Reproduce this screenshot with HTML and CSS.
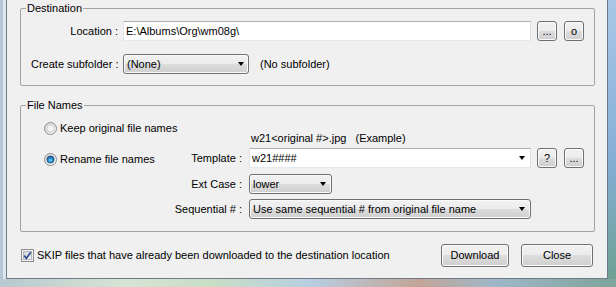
FILE: index.html
```html
<!DOCTYPE html>
<html>
<head>
    <meta charset="UTF-8">
    <title>Download</title>
    <link rel="stylesheet" href="styles.css">
</head>
<body>
    <div class="window">
        <fieldset class="group">
            <legend>Destination</legend>
            <div class="group-body dest">
                <div class="row">
                    <label class="cap">Location :</label>
                    <div class="textbox loc">E:\Albums\Org\wm08g\</div>
                    <button class="btn tiny first">...</button>
                    <button class="btn tiny">o</button>
                </div>
                <div class="row">
                    <label class="cap">Create subfolder :</label>
                    <div class="dropdown sub"><span>(None)</span><span class="arrow"></span></div>
                    <span class="note">(No subfolder)</span>
                </div>
            </div>
        </fieldset>

        <fieldset class="group names">
            <legend>File Names</legend>
            <div class="group-body names-body">
                <div class="options">
                    <label class="option">
                        <svg class="radio" width="13" height="13" viewBox="0 0 13 13">
                            <defs>
                                <linearGradient id="r1" x1="0" y1="0" x2="1" y2="1">
                                    <stop offset="0" stop-color="#d6d6d6"/>
                                    <stop offset="1" stop-color="#fbfbfb"/>
                                </linearGradient>
                            </defs>
                            <circle cx="6.5" cy="6.5" r="6" fill="url(#r1)" stroke="#8c8c8c"/>
                            <circle cx="6.5" cy="6.5" r="3.8" fill="#f4f4f4" stroke="#c9c9c9"/>
                        </svg>
                        Keep original file names
                    </label>
                    <label class="option second">
                        <svg class="radio" width="13" height="13" viewBox="0 0 13 13">
                            <defs>
                                <linearGradient id="r2" x1="0" y1="0" x2="1" y2="1">
                                    <stop offset="0" stop-color="#d6d6d6"/>
                                    <stop offset="1" stop-color="#fbfbfb"/>
                                </linearGradient>
                                <radialGradient id="r2dot" cx="0.5" cy="0.6" r="0.6">
                                    <stop offset="0" stop-color="#6fd3fa"/>
                                    <stop offset="0.6" stop-color="#1f82c6"/>
                                    <stop offset="1" stop-color="#0d3f6e"/>
                                </radialGradient>
                            </defs>
                            <circle cx="6.5" cy="6.5" r="6" fill="url(#r2)" stroke="#8c8c8c"/>
                            <circle cx="6.5" cy="6.5" r="3.6" fill="url(#r2dot)" stroke="#24507a" stroke-width="0.8"/>
                        </svg>
                        Rename file names
                    </label>
                </div>
                <div class="fields">
                    <div class="example">
                        <span>w21&lt;original #&gt;.jpg</span>
                        <span class="example-tag">(Example)</span>
                    </div>
                    <div class="field-row template">
                        <label class="field-label">Template :</label>
                        <div class="textbox combo"><span>w21####</span><span class="arrow"></span></div>
                        <button class="btn tiny first">?</button>
                        <button class="btn tiny">...</button>
                    </div>
                    <div class="field-row ext">
                        <label class="field-label">Ext Case :</label>
                        <div class="dropdown ext-case"><span>lower</span><span class="arrow"></span></div>
                    </div>
                    <div class="field-row seq">
                        <label class="field-label">Sequential # :</label>
                        <div class="dropdown seq-mode"><span>Use same sequential # from original file name</span><span class="arrow"></span></div>
                    </div>
                </div>
            </div>
        </fieldset>

        <div class="footer">
            <label class="skip">
                <svg class="check" width="13" height="13" viewBox="0 0 13 13">
                    <defs>
                        <linearGradient id="cb" x1="0" y1="0" x2="1" y2="1">
                            <stop offset="0" stop-color="#cfd3d8"/>
                            <stop offset="1" stop-color="#f6f7f8"/>
                        </linearGradient>
                    </defs>
                    <rect x="0.5" y="0.5" width="12" height="12" fill="#f3f3f3" stroke="#8e8f8f"/>
                    <rect x="2.5" y="2.5" width="8" height="8" fill="url(#cb)" stroke="#b4b9bf"/>
                    <path d="M3.2 6.6 L5.4 9.4 L9.8 3.2" fill="none" stroke="#2e4c92" stroke-width="1.7"/>
                </svg>
                SKIP files that have already been downloaded to the destination location
            </label>
            <button class="btn action download">Download</button>
            <button class="btn action">Close</button>
        </div>
    </div>
</body>
</html>
```

FILE: styles.css
```css
* {
    box-sizing: border-box;
    margin: 0;
    padding: 0;
}

body {
    width: 616px;
    height: 287px;
    overflow: hidden;
    font-family: "Liberation Sans", Arial, sans-serif;
    font-size: 11px;
    line-height: 13px;
    color: #000;
    background:
        linear-gradient(90deg, #b9c8cf 0%, #d6e4d4 20%, #c9ddc4 35%, #b7cfe2 50%, #c2a597 68%, #9fb7c8 80%, #7ea49a 100%) left bottom / 100% 8px no-repeat,
        linear-gradient(90deg, #b5c6d6 0, #b5c6d6 3px, #dfe7ee 3px, #dfe7ee 6px) left top / 6px 100% no-repeat,
        linear-gradient(180deg, #a9c8e6 0%, #86afd6 55%, #6d9f8f 100%);
}

.window {
    width: 602px;
    height: 279px;
    margin-left: 6px;
    background: #f0f0f0;
    border: 1px solid #6e7a86;
    border-top: none;
    padding: 2px 12px 0 13px;
}

button,
label {
    font: inherit;
    color: inherit;
}

.group {
    border: 1px solid #a3a3a3;
    border-radius: 2px;
    padding: 0;
    margin: 0;
    min-width: 0;
}

.group legend {
    margin-left: 5px;
    padding: 0 1px;
    line-height: 13px;
}

.dest {
    padding: 6px 0 11px 10px;
}

.row {
    display: flex;
    align-items: center;
    height: 20px;
}

.row + .row {
    margin-top: 13px;
}

.cap {
    width: 87px;
    margin-right: 5px;
    text-align: right;
    white-space: nowrap;
}

.textbox {
    height: 20px;
    background: #fff;
    border: 1px solid;
    border-color: #abadb3 #dbdfe6 #e3e9ef #e2e3ea;
    padding: 0 2px;
    line-height: 18px;
    white-space: nowrap;
}

.loc {
    width: 408px;
}

.combo {
    width: 282px;
    display: flex;
    justify-content: space-between;
    align-items: center;
    padding-right: 5px;
}

.btn {
    height: 20px;
    border: 1px solid #707070;
    border-radius: 3px;
    background: linear-gradient(180deg, #f2f2f2 0%, #ebebeb 50%, #dddddd 50%, #cfcfcf 100%);
    box-shadow: inset 0 0 0 1px #fbfbfb;
    text-align: center;
    line-height: 16px;
    cursor: default;
}

.tiny {
    width: 20px;
    margin-left: 7px;
    font-size: 11px;
}

.tiny.first {
    margin-left: 6px;
}

.dropdown {
    height: 20px;
    border: 1px solid #707070;
    border-radius: 3px;
    background: linear-gradient(180deg, #f2f2f2 0%, #ebebeb 50%, #dddddd 50%, #cfcfcf 100%);
    box-shadow: inset 0 0 0 1px #fbfbfb;
    display: flex;
    justify-content: space-between;
    align-items: center;
    padding: 0 4px 0 3px;
    white-space: nowrap;
}

.arrow {
    width: 1px;
    height: 0;
    border-top: 4px solid #000;
    border-left: 3px solid transparent;
    border-right: 3px solid transparent;
    flex: none;
}

.sub {
    width: 126px;
}

.note {
    margin-left: 11px;
}

.names {
    margin-top: 13px;
}

.names-body {
    display: flex;
    padding-bottom: 12px;
}

.options {
    width: 139px;
    padding: 10px 0 0 23px;
}

.option {
    display: flex;
    align-items: center;
    height: 13px;
    white-space: nowrap;
}

.option.second {
    margin-top: 18px;
}

.radio {
    flex: none;
    margin-right: 3px;
}

.fields {
    padding-top: 20px;
}

.example {
    height: 13px;
    padding-left: 91px;
    white-space: nowrap;
}

.example-tag {
    margin-left: 6px;
}

.field-row {
    display: flex;
    align-items: center;
    height: 20px;
}

.field-label {
    width: 82px;
    margin-right: 7px;
    text-align: right;
    white-space: nowrap;
}

.template {
    margin-top: 3px;
}

.ext {
    margin-top: 6px;
}

.seq {
    margin-top: 5px;
}

.ext-case {
    width: 83px;
    padding-right: 5px;
}

.seq-mode {
    width: 282px;
    padding-right: 5px;
}

.footer {
    display: flex;
    align-items: center;
    height: 23px;
    margin-top: 12px;
}

.skip {
    display: flex;
    align-items: center;
    margin-left: 1px;
    flex: 1;
    white-space: nowrap;
}

.check {
    flex: none;
    margin-right: 3px;
}

.action {
    height: 23px;
    width: 72px;
    line-height: 19px;
    margin-right: 2px;
}

.download {
    width: 68px;
    margin-right: 12px;
}
```
